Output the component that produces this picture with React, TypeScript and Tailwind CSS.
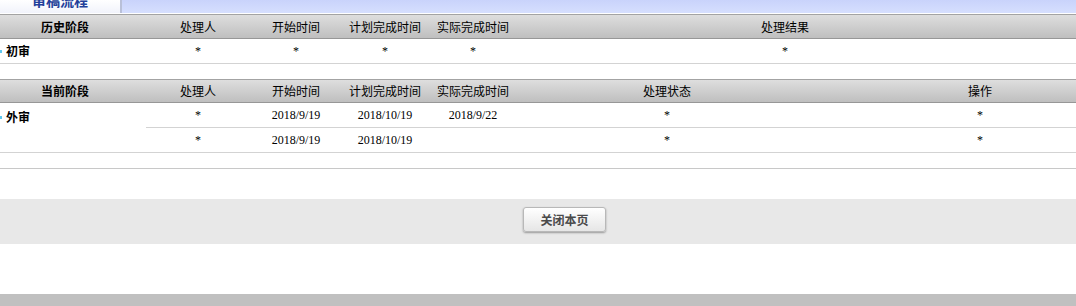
import React from 'react';

// 审稿流程 page: history stage table, current stage table and a close button bar

const SERIF = "font-['Liberation_Serif','Times_New_Roman',serif]";
const CJK = "font-['Noto_Sans_CJK_SC','Liberation_Sans',sans-serif]";

type Col = { label: string; w: string; pad?: string };

const historyCols: Col[] = [
  { label: '处理人', w: 'w-[104px]' },
  { label: '开始时间', w: 'w-[92px]' },
  { label: '计划完成时间', w: 'w-[86px]' },
  { label: '实际完成时间', w: 'w-[90px]' },
  { label: '处理结果', w: 'w-[534px]' },
];

const currentCols: Col[] = [
  { label: '处理人', w: 'w-[104px]' },
  { label: '开始时间', w: 'w-[92px]' },
  { label: '计划完成时间', w: 'w-[86px]' },
  { label: '实际完成时间', w: 'w-[90px]' },
  { label: '处理状态', w: 'w-[298px]' },
  { label: '操作', w: 'flex-1', pad: 'pl-[68px]' },
];

const currentRows = [
  ['*', '2018/9/19', '2018/10/19', '2018/9/22', '*', '*'],
  ['*', '2018/9/19', '2018/10/19', '', '*', '*'],
];

function HeaderRow({ title, cols, h }: { title: string; cols: Col[]; h: string }) {
  return (
    <div
      className={`flex ${h} items-center border-t border-b border-t-[#a3a3a3] border-b-[#979797] bg-gradient-to-b from-[#dedede] to-[#bfbfbf] text-[12px] text-black ${CJK}`}
    >
      <div className="w-[146px] text-center font-bold pr-[16px]">{title}</div>
      {cols.map((c) => (
        <div key={c.label} className={`${c.w} ${c.pad ?? ''} text-center`}>
          {c.label}
        </div>
      ))}
    </div>
  );
}

function StageName({ name }: { name: string }) {
  return (
    <div className={`flex items-center gap-[4px] text-[12px] font-bold text-black ${CJK}`}>
      <span className="w-[2px] h-[3px] bg-[#5fc8f0]" />
      {name}
    </div>
  );
}

export default function App() {
  return (
    <div className="w-[1076px] h-[306px] bg-white overflow-hidden flex flex-col">
      {/* tab strip */}
      <div className="flex h-[13px] bg-gradient-to-b from-[#c9d3fb] to-[#d6dffe] overflow-hidden">
        <div className="w-[122px] bg-gradient-to-b from-[#ffffff] to-[#f1f3fb] border-r-[2px] border-r-[#b9c0d8] flex justify-center overflow-hidden">
          <span className={`text-[14px] leading-[14px] font-bold text-[#23409a] -mt-[7px] ${CJK}`}>审稿流程</span>
        </div>
      </div>
      <div className="h-px bg-white" />

      {/* history stage */}
      <HeaderRow title="历史阶段" cols={historyCols} h="h-[25px]" />
      <div className="flex h-[25px] items-center border-b border-[#d3d3d3] text-[12px] text-black">
        <div className="w-[146px]">
          <StageName name="初审" />
        </div>
        {historyCols.map((c) => (
          <div key={c.label} className={`${c.w} text-center ${SERIF}`}>
            *
          </div>
        ))}
      </div>

      <div className="h-[15px]" />

      {/* current stage */}
      <HeaderRow title="当前阶段" cols={currentCols} h="h-[24px]" />
      <div className="flex">
        <div className="w-[146px] pt-[5px] border-b border-[#d3d3d3]">
          <StageName name="外审" />
        </div>
        <div className="flex-1 flex flex-col">
          {currentRows.map((row, i) => (
            <div key={i} className={`flex h-[25px] items-center border-b border-[#d3d3d3] text-[12px] text-black ${SERIF}`}>
              {row.map((v, j) => (
                <div key={j} className={`${currentCols[j].w} ${currentCols[j].pad ?? ''} text-center`}>
                  {v}
                </div>
              ))}
            </div>
          ))}
        </div>
      </div>
      <div className="h-[16px] border-b border-[#c8c8c8]" />

      <div className="h-[30px]" />

      {/* button bar */}
      <div className="h-[45px] bg-[#e8e8e8] flex justify-center items-start pt-[8px]">
        <button
          className={`ml-[53px] w-[83px] h-[25px] rounded-[3px] border border-[#b8b8b8] bg-gradient-to-b from-[#ffffff] to-[#e6e6e6] shadow-[0_1px_2px_rgba(0,0,0,0.35)] text-[12px] font-bold text-[#4a4a4a] ${CJK}`}
        >
          关闭本页
        </button>
      </div>

      <div className="h-[50px]" />
      <div className="flex-1 bg-[#c0c0c0]" />
    </div>
  );
}
